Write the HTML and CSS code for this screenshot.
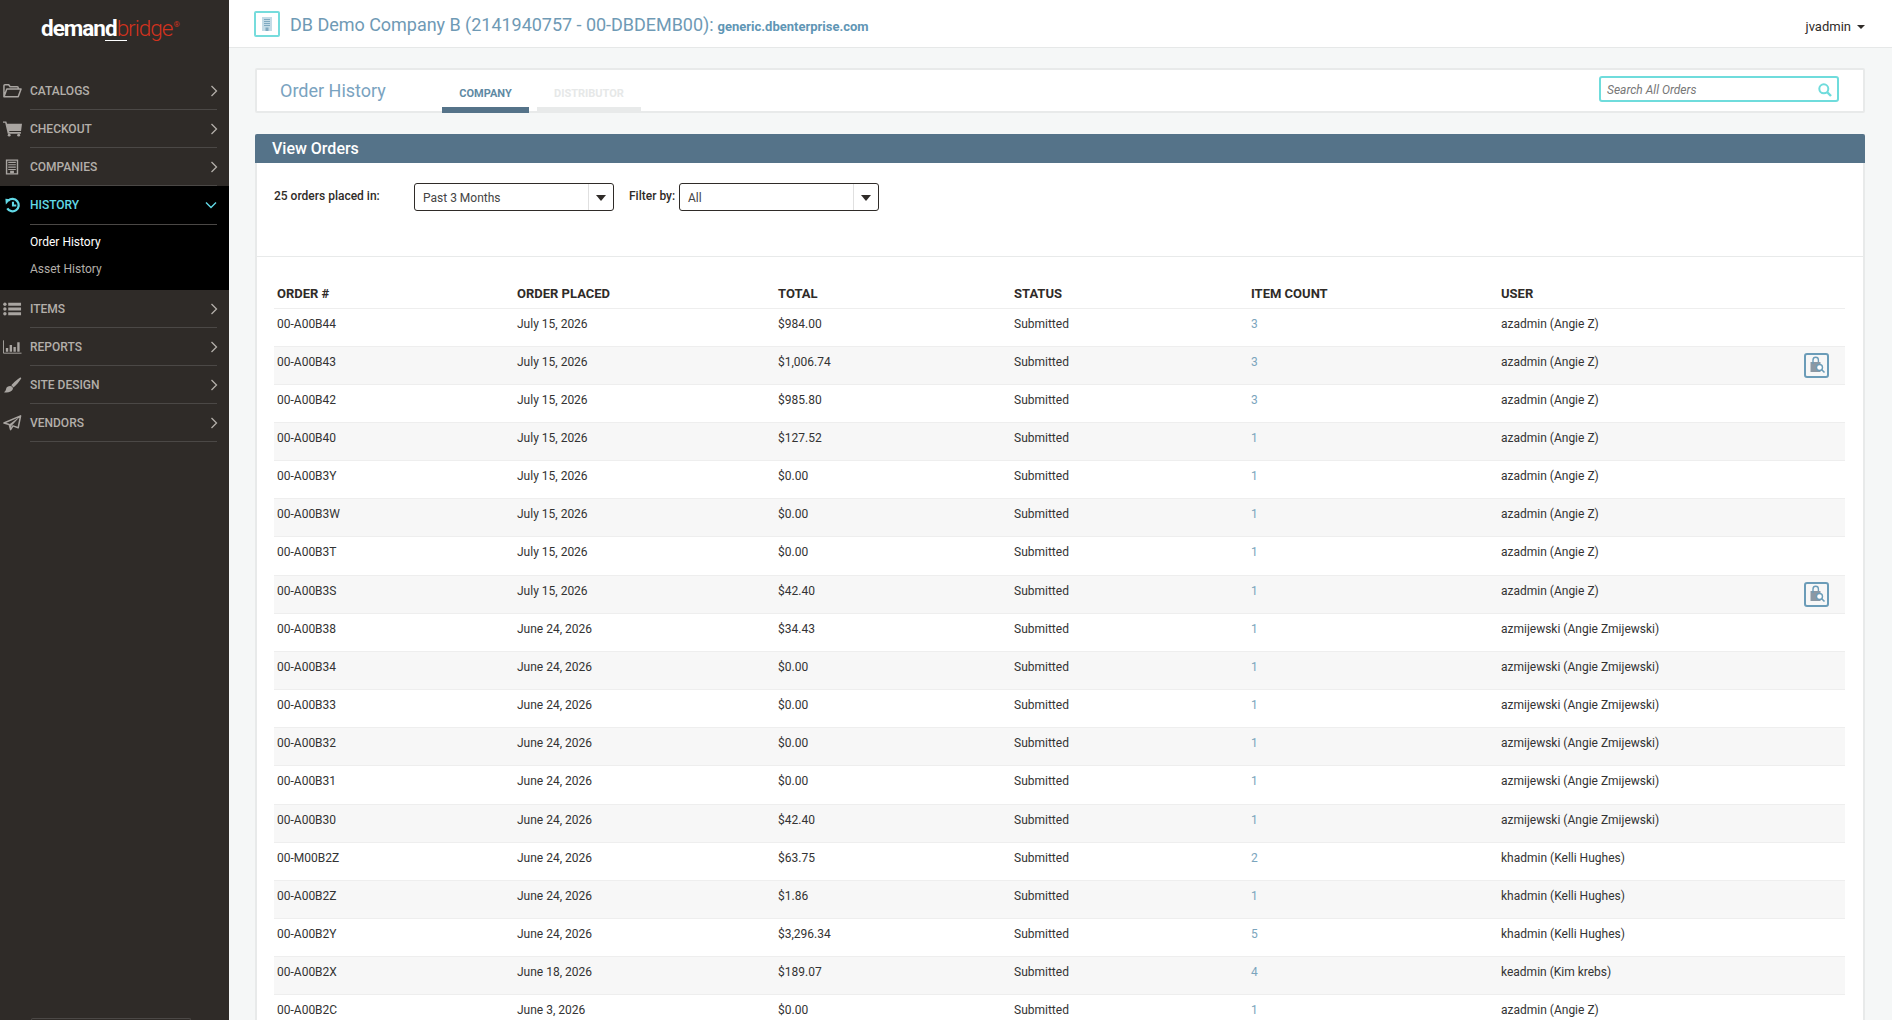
FILE: index.html
```html
<!DOCTYPE html>
<html lang="en">

<head>
    <meta charset="UTF-8">
    <title>Order History</title>
    <link rel="stylesheet" href="styles.css">
</head>

<body>
    <!-- side menu -->
    <aside class="sidebar">
        <div class="logo"><span class="logo-demand">deman<span class="logo-d">d</span></span><span class="logo-bridge">bridge</span><span class="logo-reg">&reg;</span></div>
        <nav class="menu">
            <a class="menu-item">
                <svg class="menu-icon" viewBox="0 0 20 16"><path d="M1 14V2.500C1 2 1.400 1.500 2 1.500h4l1.500 2H15c.6 0 1 .4 1 1V6M1 14l3-8h15l-3 8H1z" fill="none" stroke="currentColor" stroke-width="1.600" stroke-linejoin="round"/></svg>
                <span class="menu-label">CATALOGS</span>
                <svg class="chevron" viewBox="0 0 8 12"><path d="M1.500 1l5 5-5 5" fill="none" stroke="currentColor" stroke-width="1.300"/></svg>
            </a>
            <a class="menu-item">
                <svg class="menu-icon" viewBox="0 0 20 16"><path d="M0 0h3.500l.8 2.500H20l-1 7.500H6.500l.3 1.200h12V13H5L2.300 1.500H0z" fill="currentColor"/><circle cx="6.500" cy="14.500" r="1.500" fill="currentColor"/><circle cx="16.500" cy="14.500" r="1.500" fill="currentColor"/></svg>
                <span class="menu-label">CHECKOUT</span>
                <svg class="chevron" viewBox="0 0 8 12"><path d="M1.500 1l5 5-5 5" fill="none" stroke="currentColor" stroke-width="1.300"/></svg>
            </a>
            <a class="menu-item">
                <svg class="menu-icon" viewBox="0 0 20 16"><path d="M3 0h13v16H3zM4.500 1.500V14.500h10V1.500z" fill="currentColor" fill-rule="evenodd"/><path d="M5.500 2.500h8v1.200h-8zM5.500 5h8v1.200h-8zM5.500 7.500h8v1.200h-8zM5.500 10h8v1.200h-8zM7.500 12h4v2.500h-4z" fill="currentColor"/></svg>
                <span class="menu-label">COMPANIES</span>
                <svg class="chevron" viewBox="0 0 8 12"><path d="M1.500 1l5 5-5 5" fill="none" stroke="currentColor" stroke-width="1.300"/></svg>
            </a>
            <div class="menu-open">
                <a class="menu-item menu-item-active">
                    <svg class="menu-icon" viewBox="0 0 20 16"><path d="M5.500 3.500A6.500 6.500 0 1 1 4.500 11.500" fill="none" stroke="currentColor" stroke-width="2.400"/><path d="M2.500 1.500l5.500 .5L3 7.500z" fill="currentColor"/><path d="M10.500 4.500V8.500H14" fill="none" stroke="currentColor" stroke-width="2.200"/></svg>
                    <span class="menu-label">HISTORY</span>
                    <svg class="chevron chevron-down" viewBox="0 0 12 8"><path d="M1 1.500l5 5 5-5" fill="none" stroke="currentColor" stroke-width="1.400"/></svg>
                </a>
                <a class="submenu-item submenu-current">Order History</a>
                <a class="submenu-item">Asset History</a>
            </div>
            <a class="menu-item">
                <svg class="menu-icon" viewBox="0 0 20 16"><path d="M5.500 1.500H19v3H5.500zM5.500 6.500H19v3H5.500zM5.500 11.500H19v3H5.500z" fill="currentColor"/><circle cx="2" cy="3" r="1.800" fill="currentColor"/><circle cx="2" cy="8" r="1.800" fill="currentColor"/><circle cx="2" cy="13" r="1.800" fill="currentColor"/></svg>
                <span class="menu-label">ITEMS</span>
                <svg class="chevron" viewBox="0 0 8 12"><path d="M1.500 1l5 5-5 5" fill="none" stroke="currentColor" stroke-width="1.300"/></svg>
            </a>
            <a class="menu-item">
                <svg class="menu-icon" viewBox="0 0 20 16"><path d="M.5 1v13.500H19.500" fill="none" stroke="currentColor" stroke-width="1"/><path d="M3 9h2.500v4H3zM7 6h2.500v7H7zM11 8h2.500v5H11zM15 3h2.500v10H15z" fill="currentColor"/></svg>
                <span class="menu-label">REPORTS</span>
                <svg class="chevron" viewBox="0 0 8 12"><path d="M1.500 1l5 5-5 5" fill="none" stroke="currentColor" stroke-width="1.300"/></svg>
            </a>
            <a class="menu-item">
                <svg class="menu-icon" viewBox="0 0 20 16"><path d="M18 0c1 0 1.500 .7 1 1.500C17.500 4 14 8.500 11 10.500L8.800 8.300C11 5.500 15.500 1.500 18 0z" fill="currentColor"/><path d="M7.500 9c2 0 3.500 1.500 2.800 3.500C9.500 15 5 16.500 1 15.500c1.500-.8 2-2 2.300-3.500C3.700 10 5.500 9 7.500 9z" fill="currentColor"/></svg>
                <span class="menu-label">SITE DESIGN</span>
                <svg class="chevron" viewBox="0 0 8 12"><path d="M1.500 1l5 5-5 5" fill="none" stroke="currentColor" stroke-width="1.300"/></svg>
            </a>
            <a class="menu-item">
                <svg class="menu-icon" viewBox="0 0 20 16"><path d="M18.500 .5L16 13l-5.500-2L8 15l-1.500-5.500L1 8z" fill="none" stroke="currentColor" stroke-width="1.600" stroke-linejoin="round"/><path d="M18.500 .5L6.500 9.500l1.500 5.500 1-4z" fill="currentColor"/></svg>
                <span class="menu-label">VENDORS</span>
                <svg class="chevron" viewBox="0 0 8 12"><path d="M1.500 1l5 5-5 5" fill="none" stroke="currentColor" stroke-width="1.300"/></svg>
            </a>
        </nav>
        <div class="sidebar-foot"></div>
    </aside>

    <div class="page">
        <!-- top bar -->
        <header class="topbar">
            <span class="company-icon">
                <svg viewBox="0 0 12 16" width="12" height="16"><path d="M1 1h10v14H1z" fill="#c4dbe6"/><path d="M3 3h6v1H3zM3 5h6v1H3zM3 7h6v1H3zM3 9h6v1H3zM4.500 11.500h3V15h-3z" fill="#7fa9c0"/></svg>
            </span>
            <span class="company-name">DB Demo Company B (2141940757 - 00-DBDEMB00):</span>
            <span class="company-domain">generic.dbenterprise.com</span>
            <span class="user-menu">jvadmin<span class="caret"></span></span>
        </header>

        <div class="content">
            <div class="title-bar">
                <h1 class="page-title">Order History</h1>
                <div class="tabs">
                    <a class="tab tab-active">COMPANY</a>
                    <a class="tab">DISTRIBUTOR</a>
                </div>
                <div class="search-box">
                    <span class="search-text">Search All Orders</span>
                    <svg class="search-icon" viewBox="0 0 14 14"><circle cx="5.800" cy="5.800" r="4.500" fill="none" stroke="#6fdcdc" stroke-width="2"/><path d="M9 9l4 4" stroke="#6fdcdc" stroke-width="2.400"/></svg>
                </div>
            </div>

            <section class="orders">
                <h2 class="orders-head">View Orders</h2>
                <div class="filters">
                    <span class="filter-label filter-count">25 orders placed in:</span>
                    <div class="select"><span class="select-value">Past 3 Months</span><span class="select-arrow"></span></div>
                    <span class="filter-label filter-by">Filter by:</span>
                    <div class="select"><span class="select-value">All</span><span class="select-arrow"></span></div>
                </div>
                <div class="table-wrap">
                    <table class="orders-table">
                        <thead>
                            <tr><th class="col-order">ORDER #</th><th class="col-placed">ORDER PLACED</th><th class="col-total">TOTAL</th><th class="col-status">STATUS</th><th class="col-count">ITEM COUNT</th><th class="col-user">USER</th><th></th></tr>
                        </thead>
                        <tbody>
                            <tr><td>00-A00B44</td><td>July 15, 2026</td><td>$984.00</td><td>Submitted</td><td><a class="count">3</a></td><td>azadmin (Angie Z)</td><td></td></tr>
                            <tr><td>00-A00B43</td><td>July 15, 2026</td><td>$1,006.74</td><td>Submitted</td><td><a class="count">3</a></td><td>azadmin (Angie Z)</td><td class="action"><a class="view-btn"><svg viewBox="0 0 18 18" width="18" height="18"><path d="M2.500 6h10v10h-10z" fill="#8c98a3"/><path d="M5 8V4a2.700 2.700 0 0 1 5.400 0v2" fill="none" stroke="#6b9cb8" stroke-width="1.400"/><circle cx="11.500" cy="11.500" r="3" fill="#fff" stroke="#6b9cb8" stroke-width="1.400"/><path d="M13.500 13.500l3 3" stroke="#6b9cb8" stroke-width="1.600"/></svg></a></td></tr>
                            <tr><td>00-A00B42</td><td>July 15, 2026</td><td>$985.80</td><td>Submitted</td><td><a class="count">3</a></td><td>azadmin (Angie Z)</td><td></td></tr>
                            <tr><td>00-A00B40</td><td>July 15, 2026</td><td>$127.52</td><td>Submitted</td><td><a class="count">1</a></td><td>azadmin (Angie Z)</td><td></td></tr>
                            <tr><td>00-A00B3Y</td><td>July 15, 2026</td><td>$0.00</td><td>Submitted</td><td><a class="count">1</a></td><td>azadmin (Angie Z)</td><td></td></tr>
                            <tr><td>00-A00B3W</td><td>July 15, 2026</td><td>$0.00</td><td>Submitted</td><td><a class="count">1</a></td><td>azadmin (Angie Z)</td><td></td></tr>
                            <tr><td>00-A00B3T</td><td>July 15, 2026</td><td>$0.00</td><td>Submitted</td><td><a class="count">1</a></td><td>azadmin (Angie Z)</td><td></td></tr>
                            <tr><td>00-A00B3S</td><td>July 15, 2026</td><td>$42.40</td><td>Submitted</td><td><a class="count">1</a></td><td>azadmin (Angie Z)</td><td class="action"><a class="view-btn"><svg viewBox="0 0 18 18" width="18" height="18"><path d="M2.500 6h10v10h-10z" fill="#8c98a3"/><path d="M5 8V4a2.700 2.700 0 0 1 5.400 0v2" fill="none" stroke="#6b9cb8" stroke-width="1.400"/><circle cx="11.500" cy="11.500" r="3" fill="#fff" stroke="#6b9cb8" stroke-width="1.400"/><path d="M13.500 13.500l3 3" stroke="#6b9cb8" stroke-width="1.600"/></svg></a></td></tr>
                            <tr><td>00-A00B38</td><td>June 24, 2026</td><td>$34.43</td><td>Submitted</td><td><a class="count">1</a></td><td>azmijewski (Angie Zmijewski)</td><td></td></tr>
                            <tr><td>00-A00B34</td><td>June 24, 2026</td><td>$0.00</td><td>Submitted</td><td><a class="count">1</a></td><td>azmijewski (Angie Zmijewski)</td><td></td></tr>
                            <tr><td>00-A00B33</td><td>June 24, 2026</td><td>$0.00</td><td>Submitted</td><td><a class="count">1</a></td><td>azmijewski (Angie Zmijewski)</td><td></td></tr>
                            <tr><td>00-A00B32</td><td>June 24, 2026</td><td>$0.00</td><td>Submitted</td><td><a class="count">1</a></td><td>azmijewski (Angie Zmijewski)</td><td></td></tr>
                            <tr><td>00-A00B31</td><td>June 24, 2026</td><td>$0.00</td><td>Submitted</td><td><a class="count">1</a></td><td>azmijewski (Angie Zmijewski)</td><td></td></tr>
                            <tr><td>00-A00B30</td><td>June 24, 2026</td><td>$42.40</td><td>Submitted</td><td><a class="count">1</a></td><td>azmijewski (Angie Zmijewski)</td><td></td></tr>
                            <tr><td>00-M00B2Z</td><td>June 24, 2026</td><td>$63.75</td><td>Submitted</td><td><a class="count">2</a></td><td>khadmin (Kelli Hughes)</td><td></td></tr>
                            <tr><td>00-A00B2Z</td><td>June 24, 2026</td><td>$1.86</td><td>Submitted</td><td><a class="count">1</a></td><td>khadmin (Kelli Hughes)</td><td></td></tr>
                            <tr><td>00-A00B2Y</td><td>June 24, 2026</td><td>$3,296.34</td><td>Submitted</td><td><a class="count">5</a></td><td>khadmin (Kelli Hughes)</td><td></td></tr>
                            <tr><td>00-A00B2X</td><td>June 18, 2026</td><td>$189.07</td><td>Submitted</td><td><a class="count">4</a></td><td>keadmin (Kim krebs)</td><td></td></tr>
                            <tr><td>00-A00B2C</td><td>June 3, 2026</td><td>$0.00</td><td>Submitted</td><td><a class="count">1</a></td><td>azadmin (Angie Z)</td><td></td></tr>
                        </tbody>
                    </table>
                </div>
            </section>
        </div>
    </div>
</body>

</html>
```
FILE: styles.css
```css
/* general */
* {
    box-sizing: border-box;
}

html,
body {
    height: 100%;
}

body {
    margin: 0;
    display: flex;
    overflow: hidden;
    font-family: Roboto, "Liberation Sans", sans-serif;
    font-size: 12px;
    color: #2f2b28;
    background-color: #f5f7f7;
}

/* side menu */
.sidebar {
    width: 229px;
    flex-shrink: 0;
    display: flex;
    flex-direction: column;
    background-color: #2f2b28;
}

.logo {
    height: 72px;
    padding: 13px 0 0 41px;
    font-size: 22.5px;
    line-height: 30px;
    letter-spacing: -1px;
    white-space: nowrap;
}

.logo-demand {
    font-weight: 700;
    color: #fff;
}

.logo-d {
    position: relative;
}

.logo-d::after {
    content: "";
    position: absolute;
    left: 0;
    top: 25px;
    width: 22px;
    height: 1px;
    background-color: #fff;
}

.logo-bridge {
    font-weight: 300;
    color: #d2321e;
}

.logo-reg {
    position: relative;
    top: -9px;
    left: 1px;
    font-size: 8px;
    letter-spacing: 0;
    color: #d2321e;
}

.menu-item {
    display: flex;
    align-items: center;
    height: 38px;
    margin-left: 3px;
    color: #b3afaa;
    position: relative;
}

.menu-item::after {
    content: "";
    position: absolute;
    left: 27px;
    right: 12px;
    bottom: 0;
    height: 1px;
    background-color: #4b4846;
}

.menu-icon {
    width: 19px;
    height: 16px;
    margin-right: 8px;
    flex-shrink: 0;
    color: #a9a5a1;
}

.menu-label {
    flex: 1;
    font-size: 12px;
    font-weight: 500;
}

.chevron {
    width: 8px;
    height: 12px;
    margin-right: 11px;
    color: #b3afaa;
}

.menu-open {
    height: 104px;
    background-color: #000;
}

.menu-item-active {
    height: 39px;
    padding-bottom: 2px;
    color: #62d9e6;
}

.menu-item-active .menu-icon {
    color: #62d9e6;
}

.chevron-down {
    width: 12px;
    height: 8px;
    margin-right: 12px;
    color: #62d9e6;
}

.submenu-item {
    display: block;
    height: 27px;
    padding-left: 30px;
    line-height: 27px;
    font-size: 12px;
    color: #b3afaa;
}

.submenu-current {
    margin-top: 4px;
    color: #fff;
}

.sidebar-foot {
    margin-top: auto;
    margin-left: 31px;
    width: 160px;
    height: 2px;
    border: 1px solid #4b4846;
    border-bottom: none;
    border-radius: 2px 2px 0 0;
}

/* top bar */
.page {
    flex: 1;
    min-width: 0;
    display: flex;
    flex-direction: column;
}

.topbar {
    height: 48px;
    display: flex;
    align-items: center;
    padding: 0 27px 0 25px;
    background-color: #fff;
    border-bottom: 1px solid #e6e8e8;
    flex-shrink: 0;
}

.company-icon {
    width: 26px;
    height: 26px;
    margin-right: 10px;
    display: flex;
    align-items: center;
    justify-content: center;
    border: 2px solid #76dcdc;
    border-radius: 2px;
}

.company-name {
    padding-top: 2px;
    font-size: 18px;
    font-weight: 400;
    letter-spacing: -0.03px;
    color: #6f9ab5;
}

.company-domain {
    margin-left: 4px;
    padding-top: 5px;
    font-size: 13px;
    font-weight: 700;
    color: #5f96b5;
}

.user-menu {
    margin-left: auto;
    padding-top: 5px;
    font-size: 13px;
    color: #2f2b28;
}

.caret {
    display: inline-block;
    margin-left: 6px;
    vertical-align: 2px;
    border-left: 4px solid transparent;
    border-right: 4px solid transparent;
    border-top: 4px solid #2f2b28;
}

/* page content */
.content {
    flex: 1;
    min-height: 0;
    padding: 20px 27px 0 26px;
    display: flex;
    flex-direction: column;
}

.title-bar {
    height: 45px;
    display: flex;
    padding-left: 23px;
    background-color: #fff;
    border: 2px solid #e8eaea;
    border-radius: 2px;
    flex-shrink: 0;
}

.page-title {
    width: 162px;
    margin: 0;
    padding-top: 9px;
    font-size: 18px;
    line-height: 24px;
    font-weight: 400;
    color: #7aa3c0;
}

.tabs {
    display: flex;
    gap: 8px;
}

.tab {
    width: 104px;
    height: 43px;
    padding-top: 17px;
    text-align: center;
    font-size: 11px;
    line-height: 14px;
    font-weight: 700;
    color: #e6e8e8;
    border-bottom: 6px solid #e8eaea;
}

.tab-active {
    width: 87px;
    color: #5f8aa3;
    border-bottom-color: #557389;
}

.search-box {
    width: 240px;
    height: 26px;
    margin: 6px 24px 0 auto;
    padding: 2px 5px 0 6px;
    display: flex;
    align-items: center;
    justify-content: space-between;
    border: 2px solid #6fdcdc;
    border-radius: 3px;
}

.search-text {
    font-size: 12px;
    font-style: italic;
    color: #777;
}

.search-icon {
    width: 14px;
    height: 14px;
}

/* orders panel */
.orders {
    flex: 1;
    min-height: 0;
    margin-top: 21px;
    background-color: #fff;
    border-left: 2px solid #e8eaea;
    border-right: 2px solid #e8eaea;
}

.orders-head {
    height: 29px;
    margin: 0 -2px;
    padding-left: 17px;
    font-size: 16px;
    line-height: 29px;
    font-weight: 500;
    color: #fff;
    background-color: #557389;
    border-radius: 2px 2px 0 0;
}

.filters {
    height: 94px;
    padding: 20px 0 0 17px;
    display: flex;
    align-items: flex-start;
    border-bottom: 1px solid #e8eaea;
}

.filter-label {
    font-weight: 500;
    line-height: 14px;
    padding-top: 6px;
    white-space: nowrap;
}

.filter-count {
    width: 140px;
}

.filter-by {
    width: 50px;
    margin-left: 15px;
}

.select {
    width: 200px;
    height: 28px;
    display: flex;
    border: 1px solid #2f2b28;
    border-radius: 3px;
}

.select-value {
    flex: 1;
    padding-left: 8px;
    line-height: 28px;
    color: #444;
}

.select-arrow {
    width: 25px;
    position: relative;
    border-left: 1px solid #e0e0e0;
}

.select-arrow::after {
    content: "";
    position: absolute;
    left: 7px;
    top: 11px;
    border-left: 5px solid transparent;
    border-right: 5px solid transparent;
    border-top: 6px solid #2f2b28;
}

/* table */
.table-wrap {
    padding: 25px 18px 0 17px;
}

.orders-table {
    width: 100%;
    table-layout: fixed;
    border-collapse: collapse;
}

.orders-table th {
    height: 26px;
    padding: 0 0 7px 3px;
    text-align: left;
    vertical-align: bottom;
    font-size: 13px;
    line-height: 14px;
    font-weight: 700;
    border-bottom: 1px solid #eee;
}

.col-order {
    width: 240px;
}

.col-placed {
    width: 261px;
}

.col-total {
    width: 236px;
}

.col-status {
    width: 237px;
}

.col-count {
    width: 250px;
}

.col-user {
    width: 280px;
}

.orders-table td {
    height: 38.17px;
    padding: 8px 0 0 3px;
    vertical-align: top;
    line-height: 14px;
    color: #333;
    border-bottom: 1px solid #eee;
}

.orders-table tbody tr:nth-child(even) td {
    background-color: #f7f7f7;
}

.count {
    color: #7ba5bd;
}

.orders-table td.action {
    padding: 6px 16px 0 0;
}

.view-btn {
    width: 25px;
    height: 25px;
    margin-left: auto;
    display: flex;
    align-items: center;
    justify-content: center;
    border: 2px solid #6b9cb8;
    border-radius: 3px;
}
```
